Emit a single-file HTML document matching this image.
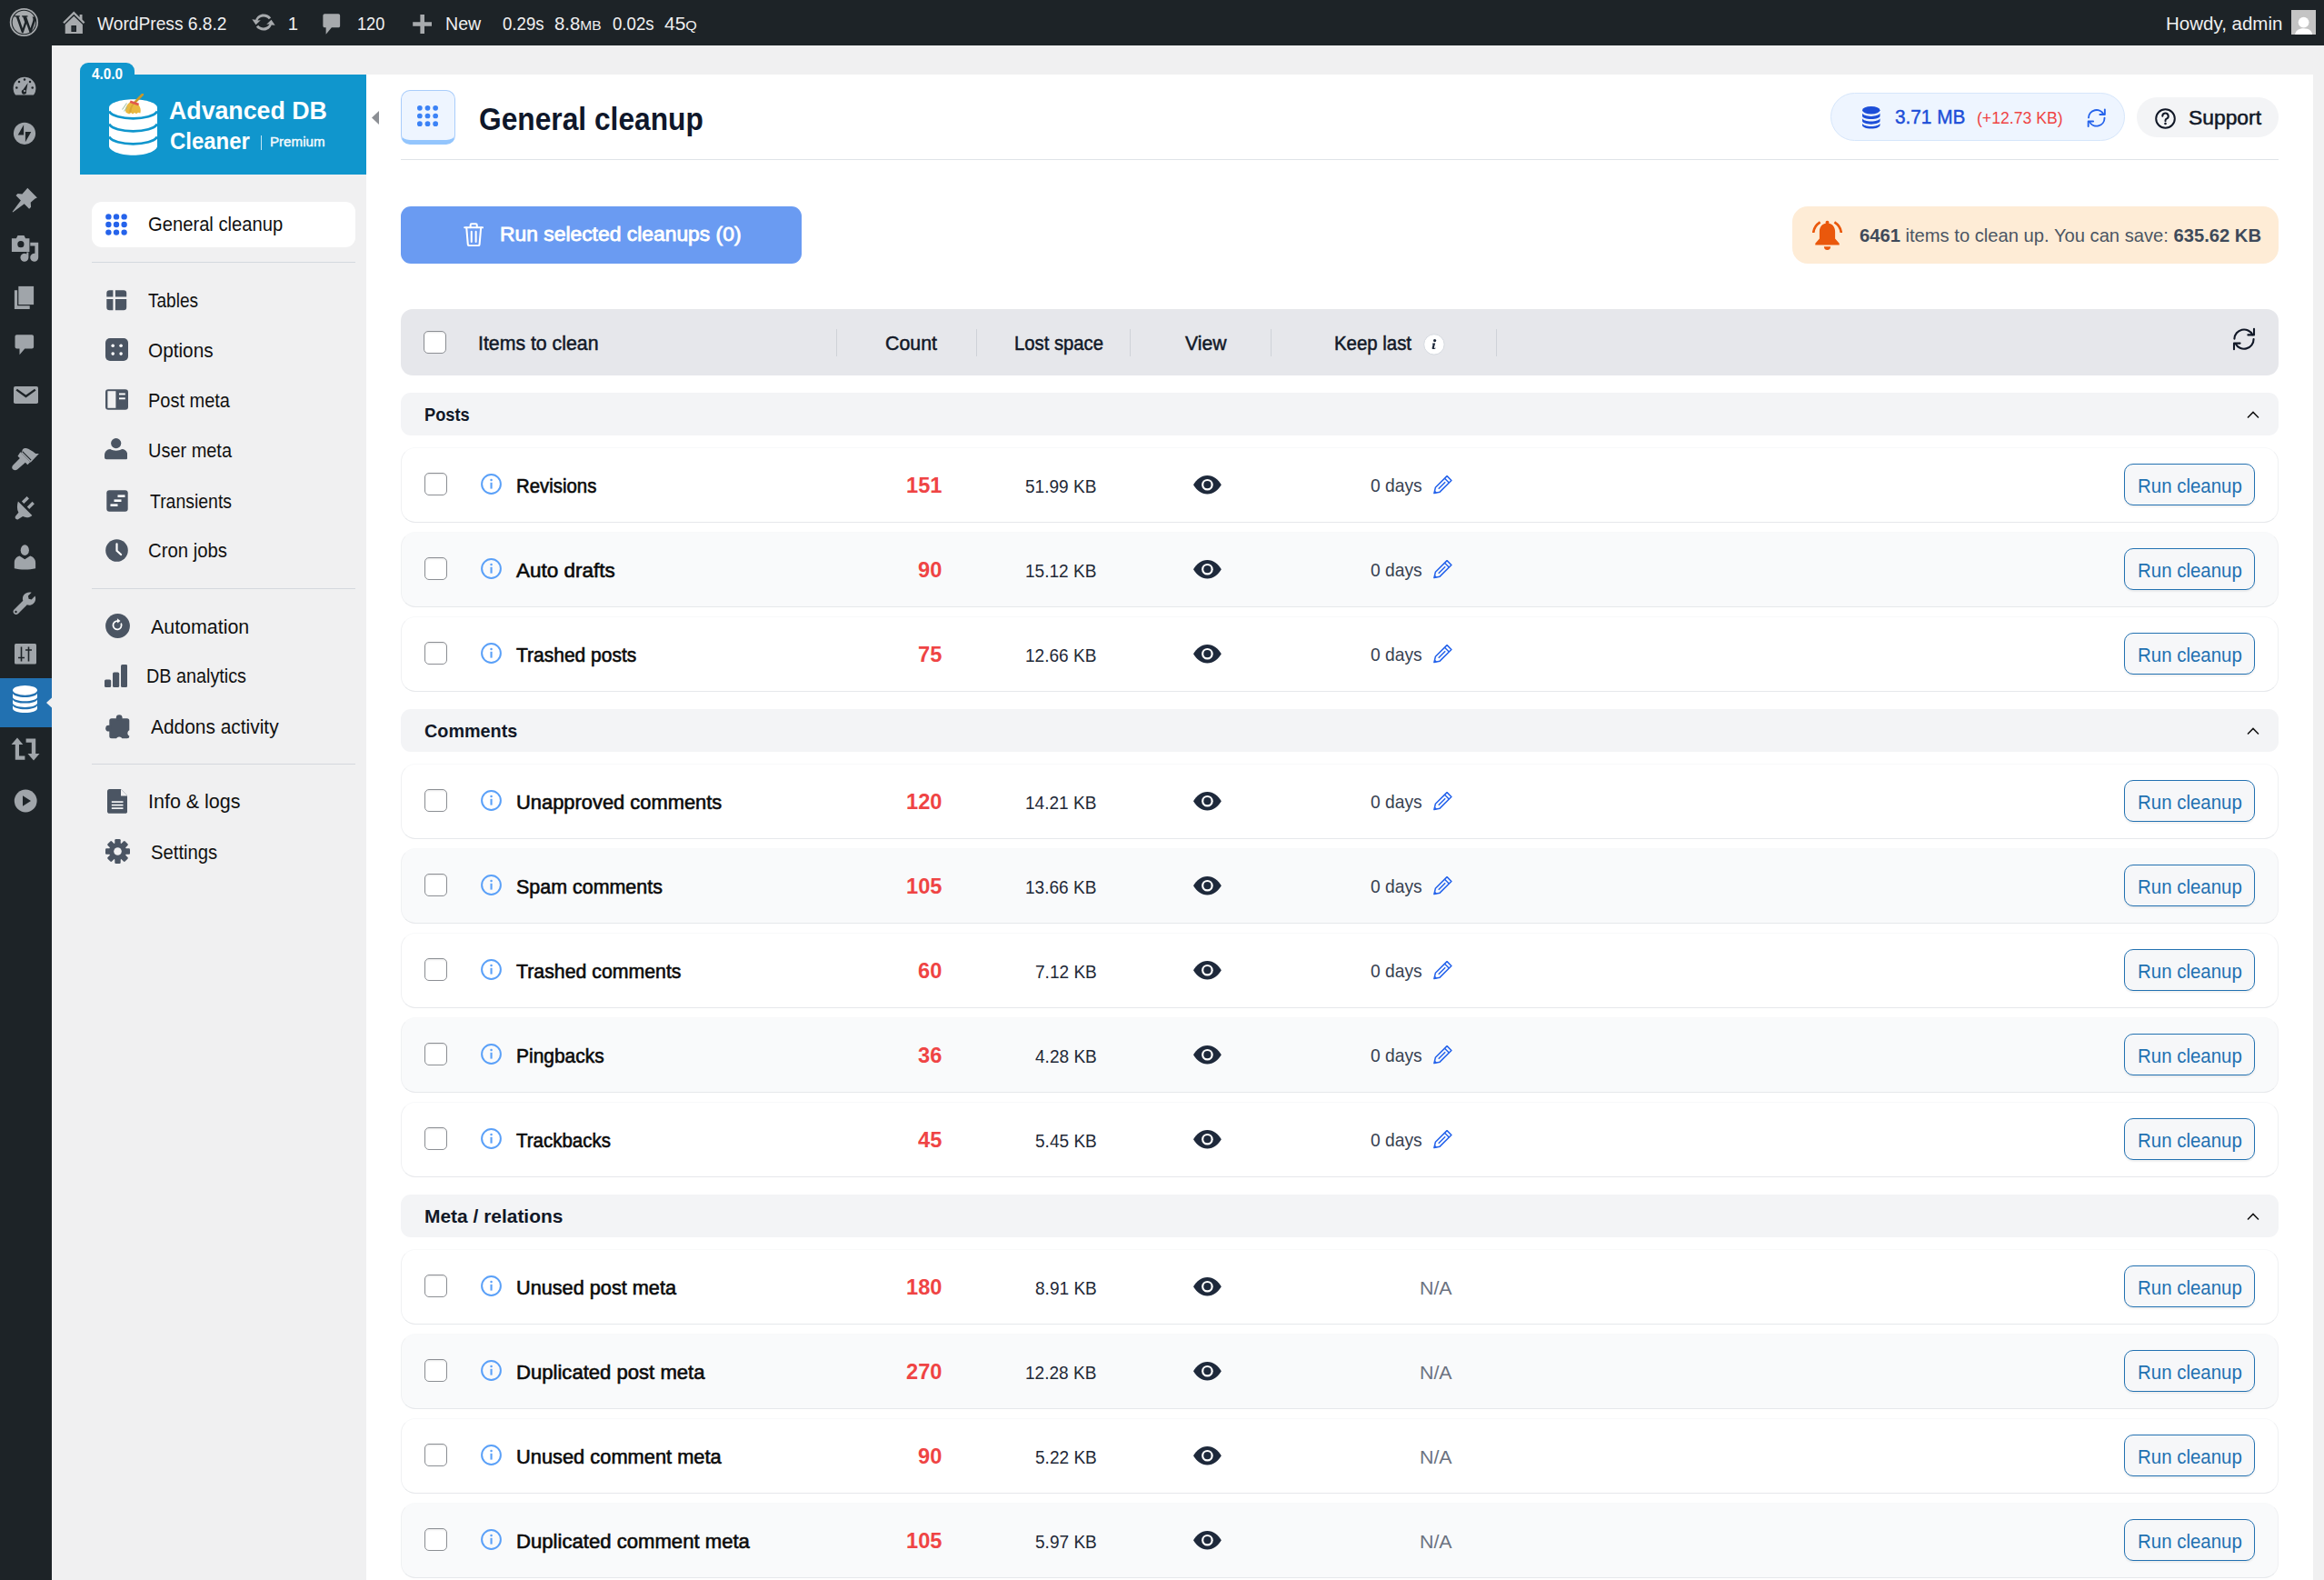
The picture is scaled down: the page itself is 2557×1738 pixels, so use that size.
<!DOCTYPE html>
<html><head><meta charset="utf-8"><title>Advanced DB Cleaner</title>
<style>
html,body{margin:0;padding:0;}
body{width:2557px;height:1738px;overflow:hidden;position:relative;background:#f0f0f1;font-family:'Liberation Sans', sans-serif;}

</style></head><body>
<div style="position:absolute;left:0px;top:0px;width:2557px;height:50px;background:#1d2327;"></div>
<svg style="position:absolute;left:10px;top:8px;" width="33" height="33" viewBox="0 0 33 33"><circle cx="16.4" cy="16.5" r="15.6" fill="#a7aaad"/><circle cx="16.4" cy="16.5" r="13.3" fill="none" stroke="#1d2327" stroke-width="1.1"/><g fill="#1d2327"><path d="M5.6 9.3h6.2v1.1l-1.2.2 4.3 12.6 2.3-6.9-2-5.7-1.1-.2V9.3h6.4v1.1l-1.3.2 4.3 12.5 2.5-7.5c.8-2.3.5-3.8-.6-5.2h3.4c.6 1.3.7 2.9 0 5l-4.5 12.9h-1.6l-3.6-10.4-3.5 10.4h-1.6L7.8 10.6l-2.2-.2z"/></g></svg>
<svg style="position:absolute;left:68px;top:11px;" width="27" height="27" viewBox="0 0 27 27"><path fill="#a7aaad" d="M13.3 1.6 1.2 13.4l1.6 1.6L13.3 4.8l10.5 10.2 1.6-1.6-2.9-2.8V5H19.6v2.9z"/><path fill="#a7aaad" d="M3.7 16 13.3 6.8 22.9 16v10.1H3.7z"/><rect x="10.4" y="17" width="5.6" height="7" fill="#1d2327"/><rect x="11.6" y="18.2" width="3.2" height="4.6" fill="#2a3035"/></svg>
<div style="position:absolute;left:107.20px;top:15.75px;white-space:nowrap;color:#f0f0f1;font-size:20.3px;line-height:20.3px;font-weight:400;transform:scaleX(0.9457);transform-origin:0 0;">WordPress 6.8.2</div>
<svg style="position:absolute;left:275px;top:13px;" width="30" height="23" viewBox="0 0 26 20"><path fill="#a7aaad" d="M13 2.2c-3.5 0-6.5 2.2-7.6 5.3L2 7.2l3.6 5.2 4.6-4.3-2.9.1C8.3 6.2 10.5 4.8 13 4.8c2 0 3.8.9 5 2.4l2.1-1.6C18.5 3.5 15.9 2.2 13 2.2zm7.4 5.4-4.6 4.3 2.9-.1c-1 2-3.2 3.4-5.7 3.4-2 0-3.8-.9-5-2.4L5.9 14.4c1.6 2.1 4.2 3.4 7.1 3.4 3.5 0 6.5-2.2 7.6-5.3l3.4.3-3.6-5.2z"/></svg>
<div style="position:absolute;left:316.80px;top:15.75px;white-space:nowrap;color:#f0f0f1;font-size:20.3px;line-height:20.3px;font-weight:400;">1</div>
<svg style="position:absolute;left:354px;top:14px;" width="21.5" height="25" viewBox="0 0 17 20"><path fill="#a7aaad" d="M2.5 1h12c.9 0 1.5.7 1.5 1.5v9c0 .8-.6 1.5-1.5 1.5H8.6L3.6 19v-6H2.5C1.7 13 1 12.3 1 11.5v-9C1 1.7 1.7 1 2.5 1z"/></svg>
<div style="position:absolute;left:393.00px;top:15.75px;white-space:nowrap;color:#f0f0f1;font-size:20.3px;line-height:20.3px;font-weight:400;transform:scaleX(0.8953);transform-origin:0 0;">120</div>
<svg style="position:absolute;left:453.6px;top:15.7px;" width="21.4" height="21" viewBox="0 0 20 20"><path fill="#a7aaad" d="M7.8 0h4.4v7.8H20v4.4h-7.8V20H7.8v-7.8H0V7.8h7.8z"/></svg>
<div style="position:absolute;left:489.50px;top:15.75px;white-space:nowrap;color:#f0f0f1;font-size:20.3px;line-height:20.3px;font-weight:400;transform:scaleX(0.9660);transform-origin:0 0;">New</div>
<div style="position:absolute;left:553.20px;top:15.75px;white-space:nowrap;color:#f0f0f1;font-size:20.3px;line-height:20.3px;font-weight:400;transform:scaleX(0.9189);transform-origin:0 0;">0.29s</div>
<div style="position:absolute;left:610.30px;top:15.75px;white-space:nowrap;color:#f0f0f1;font-size:20.3px;line-height:20.3px;font-weight:400;transform:scaleX(1.0048);transform-origin:0 0;">8.8<span style="font-size:15.5px">MB</span></div>
<div style="position:absolute;left:673.70px;top:15.75px;white-space:nowrap;color:#f0f0f1;font-size:20.3px;line-height:20.3px;font-weight:400;transform:scaleX(0.9189);transform-origin:0 0;">0.02s</div>
<div style="position:absolute;left:730.50px;top:15.75px;white-space:nowrap;color:#f0f0f1;font-size:20.3px;line-height:20.3px;font-weight:400;transform:scaleX(1.0339);transform-origin:0 0;">45<span style="font-size:15.5px">Q</span></div>
<div style="position:absolute;left:2383.00px;top:15.78px;white-space:nowrap;color:#f0f0f1;font-size:20.5px;line-height:20.5px;font-weight:400;">Howdy, admin</div>
<div style="position:absolute;left:2521px;top:11px;width:27px;height:27px;background:#c4c4c4;overflow:hidden;"></div>
<svg style="position:absolute;left:2521px;top:11px;" width="27" height="27" viewBox="0 0 27 27"><circle cx="13.6" cy="13.6" r="5.9" fill="#fff"/><path d="M4.2 27c.3-4.5 4.2-6.8 9.4-6.8s9.1 2.3 9.4 6.8z" fill="#fff"/></svg>
<div style="position:absolute;left:0px;top:50px;width:57px;height:1688px;background:#1d2327;"></div>
<svg style="position:absolute;left:0px;top:80px;" width="57" height="30" viewBox="0 80 57 30"><path fill="#a0a5aa" d="M17.1 104.6A12.4 12.4 0 1 1 36.9 104.6Z"/><g fill="#1d2327"><circle cx="27" cy="87.4" r="1.25"/><circle cx="21" cy="90" r="1.25"/><circle cx="33" cy="90" r="1.25"/><circle cx="18.3" cy="96.5" r="1.25"/><circle cx="35.7" cy="96.5" r="1.25"/><path d="M30.6 91.3 25.3 98.8a2.6 2.6 0 1 0 3.6 1.6z"/></g><circle cx="27.1" cy="100.1" r="1.15" fill="#a0a5aa"/></svg>
<svg style="position:absolute;left:0px;top:130px;" width="57" height="32" viewBox="0 130 57 32"><circle cx="27" cy="146.8" r="12.1" fill="#a0a5aa"/><path fill="#1d2327" d="M26.1 137.3v11.2h-6.4zM27.9 156.3v-11.2h6.4z"/></svg>
<svg style="position:absolute;left:0px;top:205px;" width="57" height="33" viewBox="0 205 57 33"><path fill="#a0a5aa" d="M30.3 206.8l10.6 10.6-2.3 1-4.9 4.4.4 4.9-2 2-5.4-5.4-12.6 9.3-.5-.5 9.3-12.6-5.4-5.4 2-2 4.9.4 4.4-4.9z"/></svg>
<svg style="position:absolute;left:0px;top:255px;" width="57" height="37" viewBox="0 255 57 37"><path fill="#a0a5aa" d="M12.9 262.3h5l1.6-3.4h7l1.6 3.4h4.3v14.6H12.9z"/><circle cx="22.9" cy="268.7" r="3.6" fill="#1d2327"/><path fill="#a0a5aa" d="M33.3 266.8h8.9v16.4a4.5 4.5 0 1 1-3.8-4.4v-8.2h-5.1z"/><path fill="#a0a5aa" d="M29.3 277.5h2.1v5.7a4.5 4.5 0 1 1-2.1-3.8z"/></svg>
<svg style="position:absolute;left:0px;top:312px;" width="57" height="30" viewBox="0 312 57 30"><path fill="#a0a5aa" d="M20.3 314.9h16.8v20.2H20.3z"/><path fill="#a0a5aa" d="M15.9 319.3h3.2v16.9h13.6v3.7H15.9z"/></svg>
<svg style="position:absolute;left:0px;top:365px;" width="57" height="31" viewBox="0 365 57 31"><path fill="#a0a5aa" d="M18.5 368.2h16.6c1.1 0 2 .9 2 2v11.3c0 1.1-.9 2-2 2h-7.8l-5.8 6.8v-6.8h-3c-1.1 0-2-.9-2-2v-11.3c0-1.1.9-2 2-2z"/></svg>
<svg style="position:absolute;left:0px;top:422px;" width="57" height="26" viewBox="0 422 57 26"><rect x="15" y="425" width="27" height="19" rx="1.8" fill="#a0a5aa"/><path d="M18.2 428.6 28.5 436l10.3-7.4" fill="none" stroke="#1d2327" stroke-width="2.4"/></svg>
<svg style="position:absolute;left:0px;top:490px;" width="57" height="30" viewBox="0 490 57 30"><path fill="#a0a5aa" d="M25 494.2c1-1 2.3-1.4 3.7-1.1 3.3.8 6.6 3 10.5 5.8l3.7.2-8.6 8.9-.5.8-10.5-10.5z"/><path fill="#a0a5aa" d="M22.4 497.3 33.3 508.2l-3 3-2.4-2.4-8.6 7.4c-1.8 1.5-4.5 1.3-5.6-.4-.9-1.4-.5-3.1.8-4.3l7.4-7.4-2.4-2.4z"/><path d="M24.6 496.6 34.1 506.1" stroke="#1d2327" stroke-width="1.1"/></svg>
<svg style="position:absolute;left:0px;top:543px;" width="57" height="31" viewBox="0 543 57 31"><path fill="#a0a5aa" d="M19.9 551.6 35.4 566.9c-2.8 2.6-6.9 3-10.3 1.2l-5.2 3.1c-1.2.5-2.4-.1-2.9-1-.6-.9-.4-2.1.5-2.9l2.9-3.6c-2-3.3-1.7-8.1-.5-12.1z"/><path fill="#a0a5aa" d="M23.9 551.6 29.6 546l2.4 2.4-5.7 5.7zM29.8 557.5l5.7-5.7 2.4 2.4-5.7 5.7z"/></svg>
<svg style="position:absolute;left:0px;top:597px;" width="57" height="31" viewBox="0 597 57 31"><ellipse cx="27.3" cy="605.2" rx="4.6" ry="5.9" fill="#a0a5aa"/><path fill="#a0a5aa" d="M15.8 625.2v-6.3c0-3.4 2.2-6.6 5.6-7.3l5.9 3.7 5.9-3.7c3.4.7 5.9 3.9 5.9 7.3v6.3c-3.5.9-7.2 1.3-11.8 1.3s-8.1-.4-11.5-1.3z"/></svg>
<svg style="position:absolute;left:0px;top:650px;" width="57" height="30" viewBox="0 650 57 30"><path fill="#a0a5aa" d="M38.5 655.6l-3.8 3.8-3.1-.7-.7-3.1 3.8-3.8c-2.8-1-6.1-.2-8.1 2.1-1.7 2-2.1 4.6-1.3 6.9l-9.8 9.8c-1.3 1.3-1.3 3.3 0 4.5 1.3 1.3 3.2 1.3 4.5 0l9.8-9.8c2.3.9 5 .4 6.9-1.3 2.4-2 3.2-5.3 1.8-8.4z"/><circle cx="17.5" cy="673" r="1.2" fill="#1d2327"/></svg>
<svg style="position:absolute;left:0px;top:705px;" width="57" height="28" viewBox="0 705 57 28"><rect x="16" y="708" width="24" height="22.5" rx="1.5" fill="#a0a5aa"/><path d="M23.5 711.5v16M31.5 711.5v16M20 723.5h7M28 715h7" stroke="#1d2327" stroke-width="1.6" fill="none"/></svg>
<div style="position:absolute;left:0px;top:746px;width:57px;height:54px;background:#2271b1;"></div>
<svg style="position:absolute;left:50.5px;top:767px;" width="6.5" height="12" viewBox="0 0 6.5 12"><path d="M6.5 0V12L0 6z" fill="#f0f0f1"/></svg>
<svg style="position:absolute;left:0px;top:750px;" width="57" height="40" viewBox="0 750 57 40"><g fill="#fff"><ellipse cx="27.5" cy="759.3" rx="13.5" ry="5.4"/><path d="M14 762.8c1 2.7 6.6 4.2 13.5 4.2s12.5-1.5 13.5-4.2v4.2c-.6 2.6-6.4 4.3-13.5 4.3s-12.9-1.7-13.5-4.3z"/><path d="M14 769.4c1 2.7 6.6 4.2 13.5 4.2s12.5-1.5 13.5-4.2v4.2c-.6 2.6-6.4 4.3-13.5 4.3s-12.9-1.7-13.5-4.3z"/><path d="M14 776c1 2.7 6.6 4.2 13.5 4.2s12.5-1.5 13.5-4.2v3.2c0 2.9-6 4.9-13.5 4.9s-13.5-2-13.5-4.9z"/></g></svg>
<svg style="position:absolute;left:0px;top:808px;" width="57" height="32" viewBox="0 808 57 32"><path fill="#a0a5aa" d="M19 811.5 12.5 819h4.3v16.8h10.6v-4.2h-6.4V819h4.3zM28.6 812.5h10.6v16.6h4.3l-6.5 7.5-6.5-7.5h4.3V816.7h-6.2z"/></svg>
<svg style="position:absolute;left:0px;top:866px;" width="57" height="30" viewBox="0 866 57 30"><circle cx="28.2" cy="881" r="12.4" fill="#a0a5aa"/><path d="M25 875.2v11.6l9-5.8z" fill="#1d2327"/></svg>
<div style="position:absolute;left:88px;top:69px;width:60px;height:30px;background:#1096cd;border-radius:9px 9px 0 0;"></div>
<div style="position:absolute;left:88px;top:82px;width:315px;height:110px;background:#1096cd;"></div>
<div style="position:absolute;left:101.00px;top:73.86px;white-space:nowrap;color:#fff;font-size:15.7px;line-height:15.7px;font-weight:700;transform:scaleX(0.9740);transform-origin:0 0;">4.0.0</div>
<svg style="position:absolute;left:120px;top:103px;" width="53" height="68" viewBox="0 0 53 68"><path fill="#fff" d="M0 15.5C0 10.5 11.9 6.3 26.5 6.3S53 10.5 53 15.5V57.5C53 62.8 41.1 67.8 26.5 67.8S0 62.8 0 57.5z"/><g fill="none" stroke="#1096cd" stroke-width="2.8"><path d="M0 19.5C3 24.5 14 27.3 26.5 27.3S50 24.5 53 19.5"/><path d="M0 33.5C3 38.5 14 41.3 26.5 41.3S50 38.5 53 33.5"/><path d="M0 47.5C3 52.5 14 55.3 26.5 55.3S50 52.5 53 47.5"/></g><path d="M28.5 9.5 36.8 1" stroke="#c9992c" stroke-width="2.6" stroke-linecap="round"/><path fill="#e9b840" d="M18.6 20.8C16.9 16.2 19.6 11.2 24.2 8.8l7.6 2.6c2.6 2.6 3.6 6.4 2.6 10.2l-2.4-.9-2 1.6-2-1.4-2 1.6-1.9-1.5-2 1.4z"/><path fill="#d4a030" opacity=".8" d="M22 20.5c.5-4 2-7.5 4.5-10l1.2.5c-2 2.7-3.2 6-3.4 9.8z"/><path fill="#e2574c" d="M23.6 7.6l9.4 3.2-.9 2.4-9.4-3.2z"/><g stroke="#9dbd9a" stroke-width="1.1" opacity=".85"><path d="M14.5 17.5 19.5 10.5"/><path d="M16.5 19.5 20 14.5"/></g></svg>
<div style="position:absolute;left:186.10px;top:108.10px;white-space:nowrap;color:#fff;font-size:28px;line-height:28px;font-weight:700;transform:scaleX(0.9547);transform-origin:0 0;">Advanced DB</div>
<div style="position:absolute;left:187.00px;top:142.92px;white-space:nowrap;color:#fff;font-size:25.5px;line-height:25.5px;font-weight:700;transform:scaleX(0.9386);transform-origin:0 0;">Cleaner</div>
<div style="position:absolute;left:287px;top:149px;width:1px;height:15.6px;background:rgba(255,255,255,.75);"></div>
<div style="position:absolute;left:297.30px;top:149.12px;white-space:nowrap;color:rgba(255,255,255,.92);font-size:14.8px;line-height:14.8px;font-weight:400;-webkit-text-stroke:0.5px currentColor;transform:scaleX(1.0219);transform-origin:0 0;">Premium</div>
<svg style="position:absolute;left:409px;top:122px;" width="8" height="15" viewBox="0 0 8 15"><path d="M8 0V15L0 7.5z" fill="#8c8f94"/></svg>
<div style="position:absolute;left:101px;top:222px;width:290px;height:49.5px;background:#fff;border-radius:11px;"></div>
<svg style="position:absolute;left:116px;top:234.7px;" width="24" height="24" viewBox="0 0 23.4 23.4"><circle cx="3.3" cy="3.3" r="3.1" fill="#2563eb"/><circle cx="3.3" cy="11.7" r="3.1" fill="#2563eb"/><circle cx="3.3" cy="20.1" r="3.1" fill="#2563eb"/><circle cx="11.7" cy="3.3" r="3.1" fill="#2563eb"/><circle cx="11.7" cy="11.7" r="3.1" fill="#2563eb"/><circle cx="11.7" cy="20.1" r="3.1" fill="#2563eb"/><circle cx="20.1" cy="3.3" r="3.1" fill="#2563eb"/><circle cx="20.1" cy="11.7" r="3.1" fill="#2563eb"/><circle cx="20.1" cy="20.1" r="3.1" fill="#2563eb"/></svg>
<div style="position:absolute;left:162.80px;top:236.44px;white-space:nowrap;color:#101010;font-size:22.3px;line-height:22.3px;font-weight:400;transform:scaleX(0.9057);transform-origin:0 0;">General cleanup</div>
<div style="position:absolute;left:101px;top:288px;width:290px;height:1.3px;background:#d4d8de;"></div>
<svg style="position:absolute;left:115.5px;top:317.5px;" width="25" height="25" viewBox="0 0 25 25"><g fill="#4b5563"><path d="M4.5 1.3h3.9v7.3H1.3V4.5a3.2 3.2 0 0 1 3.2-3.2z"/><path d="M10.9 1.3h9.1a3.2 3.2 0 0 1 3.2 3.2v4.1H10.9z"/><path d="M1.3 11.1h7.1v12.2H4.5a3.2 3.2 0 0 1-3.2-3.2z"/><path d="M10.9 11.1h12.3v9a3.2 3.2 0 0 1-3.2 3.2h-9.1z"/></g></svg>
<div style="position:absolute;left:163.00px;top:319.94px;white-space:nowrap;color:#101010;font-size:22.3px;line-height:22.3px;font-weight:400;transform:scaleX(0.8533);transform-origin:0 0;">Tables</div>
<svg style="position:absolute;left:115.5px;top:372.1px;" width="25" height="25" viewBox="0 0 25 25"><rect x="0" y="0" width="25" height="25" rx="5" fill="#4b5563"/><g fill="#fff"><circle cx="8.2" cy="8.3" r="1.8"/><circle cx="17.1" cy="8.3" r="1.8"/><circle cx="8.2" cy="17.1" r="1.8"/><circle cx="17.1" cy="17.1" r="1.8"/></g></svg>
<div style="position:absolute;left:163.00px;top:374.55px;white-space:nowrap;color:#101010;font-size:22.3px;line-height:22.3px;font-weight:400;transform:scaleX(0.9318);transform-origin:0 0;">Options</div>
<svg style="position:absolute;left:115.5px;top:427.3px;" width="25" height="25" viewBox="0 0 25 25"><rect x="0" y="1.2" width="25" height="22.6" rx="3.2" fill="#4b5563"/><rect x="2.4" y="3.2" width="9" height="18.6" fill="#f0f0f1"/><g fill="#fff"><rect x="15" y="5.5" width="6.8" height="1.9"/><rect x="15" y="10.4" width="6.8" height="1.9"/></g></svg>
<div style="position:absolute;left:163.00px;top:429.75px;white-space:nowrap;color:#101010;font-size:22.3px;line-height:22.3px;font-weight:400;transform:scaleX(0.8965);transform-origin:0 0;">Post meta</div>
<svg style="position:absolute;left:114.5px;top:482.3px;" width="25.5" height="25" viewBox="0 0 25.5 25"><g fill="#4b5563"><circle cx="12.7" cy="5.6" r="5.6"/><path d="M0 19c0-3.9 2.7-6.9 6.3-6.9 1.9 1.2 4 1.7 6.4 1.7s4.5-.5 6.4-1.7c3.6 0 6.3 3 6.3 6.9v2c0 1.3-.9 2.3-2.1 2.3H2.1C.9 23.3 0 22.3 0 21z"/></g></svg>
<div style="position:absolute;left:163.00px;top:484.75px;white-space:nowrap;color:#101010;font-size:22.3px;line-height:22.3px;font-weight:400;transform:scaleX(0.8946);transform-origin:0 0;">User meta</div>
<svg style="position:absolute;left:115.5px;top:538.1px;" width="25" height="25" viewBox="0 0 25 25"><rect x="1.3" y="1.3" width="23.4" height="23.4" rx="3" fill="#4b5563"/><g fill="#fff"><rect x="13.5" y="6.4" width="8" height="2.6"/><rect x="9.5" y="11.4" width="8" height="2.6"/><rect x="5.5" y="16.4" width="8" height="2.6"/></g></svg>
<div style="position:absolute;left:164.50px;top:540.54px;white-space:nowrap;color:#101010;font-size:22.3px;line-height:22.3px;font-weight:400;transform:scaleX(0.8715);transform-origin:0 0;">Transients</div>
<svg style="position:absolute;left:115.5px;top:592.7px;" width="25" height="25" viewBox="0 0 25 25"><circle cx="12.5" cy="12.5" r="12.3" fill="#4b5563"/><path d="M12.5 5.3v7.4l4.6 4.3" fill="none" stroke="#fff" stroke-width="2.2" stroke-linecap="round"/></svg>
<div style="position:absolute;left:163.00px;top:595.14px;white-space:nowrap;color:#101010;font-size:22.3px;line-height:22.3px;font-weight:400;transform:scaleX(0.9116);transform-origin:0 0;">Cron jobs</div>
<div style="position:absolute;left:101px;top:647px;width:290px;height:1.3px;background:#d4d8de;"></div>
<svg style="position:absolute;left:115.5px;top:675.1px;" width="27" height="27" viewBox="-0.7 -0.7 27 27"><circle cx="12.8" cy="12.8" r="13.4" fill="#4b5563"/><path d="M16.7 10.6a4.6 4.6 0 1 1-3.9-3.1" fill="none" stroke="#fff" stroke-width="1.8" stroke-linecap="round"/><path d="M12.2 4.6l3.6 2.7-3.3 2.6z" fill="#fff"/></svg>
<div style="position:absolute;left:166.00px;top:678.54px;white-space:nowrap;color:#101010;font-size:22.3px;line-height:22.3px;font-weight:400;transform:scaleX(0.9592);transform-origin:0 0;">Automation</div>
<svg style="position:absolute;left:114.7px;top:730.5px;" width="25" height="25" viewBox="0 0 25 25"><g fill="#4b5563"><rect x="0" y="16.4" width="7.2" height="8.6" rx="1.6"/><rect x="9" y="8.6" width="7.2" height="16.4" rx="1.6"/><rect x="18" y="0" width="7.2" height="25" rx="1.6"/></g></svg>
<div style="position:absolute;left:161.30px;top:732.94px;white-space:nowrap;color:#101010;font-size:22.3px;line-height:22.3px;font-weight:400;transform:scaleX(0.8877);transform-origin:0 0;">DB analytics</div>
<svg style="position:absolute;left:115.7px;top:785.5px;" width="27" height="27" viewBox="0 0 27 27"><g fill="#4b5563"><rect x="4.3" y="4.3" width="22" height="22" rx="2.5"/><circle cx="15.2" cy="3.6" r="3.4"/><circle cx="3.6" cy="15.2" r="3.4"/></g><circle cx="27.6" cy="20.5" r="3.2" fill="#f0f0f1"/><circle cx="15.2" cy="27.6" r="3.2" fill="#f0f0f1"/></svg>
<div style="position:absolute;left:166.00px;top:788.94px;white-space:nowrap;color:#101010;font-size:22.3px;line-height:22.3px;font-weight:400;transform:scaleX(0.9375);transform-origin:0 0;">Addons activity</div>
<div style="position:absolute;left:101px;top:840px;width:290px;height:1.3px;background:#d4d8de;"></div>
<svg style="position:absolute;left:117.5px;top:867.5px;" width="22.3" height="27" viewBox="0 0 22.3 27"><path fill="#4b5563" d="M2.4 0h12.7l7.2 7.3v17.1c0 1.3-1.1 2.4-2.4 2.4H2.4C1.1 26.8 0 25.7 0 24.4V2.4C0 1.1 1.1 0 2.4 0z"/><path fill="#f0f0f1" d="M15 0v7.4h7.3z"/><g fill="#fff"><rect x="4.8" y="13.3" width="12.7" height="1.6"/><rect x="4.8" y="16.8" width="12.7" height="1.6"/><rect x="4.8" y="20.3" width="12.7" height="1.6"/></g></svg>
<div style="position:absolute;left:163.00px;top:870.94px;white-space:nowrap;color:#101010;font-size:22.3px;line-height:22.3px;font-weight:400;transform:scaleX(0.9634);transform-origin:0 0;">Info & logs</div>
<svg style="position:absolute;left:116px;top:923.1px;" width="27" height="27" viewBox="0 0 27 27"><g transform="translate(13.5 13.5)"><g fill="#4b5563"><rect x="-3.2" y="-13.5" width="6.4" height="6" rx="1.2" transform="rotate(0)"/><rect x="-3.2" y="-13.5" width="6.4" height="6" rx="1.2" transform="rotate(45)"/><rect x="-3.2" y="-13.5" width="6.4" height="6" rx="1.2" transform="rotate(90)"/><rect x="-3.2" y="-13.5" width="6.4" height="6" rx="1.2" transform="rotate(135)"/><rect x="-3.2" y="-13.5" width="6.4" height="6" rx="1.2" transform="rotate(180)"/><rect x="-3.2" y="-13.5" width="6.4" height="6" rx="1.2" transform="rotate(225)"/><rect x="-3.2" y="-13.5" width="6.4" height="6" rx="1.2" transform="rotate(270)"/><rect x="-3.2" y="-13.5" width="6.4" height="6" rx="1.2" transform="rotate(315)"/><circle r="9.6"/></g><circle r="4.3" fill="#f0f0f1"/></g></svg>
<div style="position:absolute;left:166.00px;top:926.54px;white-space:nowrap;color:#101010;font-size:22.3px;line-height:22.3px;font-weight:400;transform:scaleX(0.9084);transform-origin:0 0;">Settings</div>
<div style="position:absolute;left:403px;top:82px;width:2142px;height:1656px;background:#fff;"></div>
<svg style="position:absolute;left:409px;top:122px;" width="8" height="15" viewBox="0 0 8 15"><path d="M8 0V15L0 7.5z" fill="#8c8f94"/></svg>
<div style="position:absolute;left:441px;top:99px;width:60px;height:60px;box-sizing:border-box;background:#eef5ff;border:1.3px solid #a9cdfb;border-bottom:5px solid #93c5fd;border-radius:10px;"></div>
<svg style="position:absolute;left:459px;top:115.6px;" width="23" height="23" viewBox="0 0 23 23"><circle cx="2.85" cy="2.85" r="2.85" fill="#3b82f6"/><circle cx="2.85" cy="11.5" r="2.85" fill="#3b82f6"/><circle cx="2.85" cy="20.150000000000002" r="2.85" fill="#3b82f6"/><circle cx="11.5" cy="2.85" r="2.85" fill="#3b82f6"/><circle cx="11.5" cy="11.5" r="2.85" fill="#3b82f6"/><circle cx="11.5" cy="20.150000000000002" r="2.85" fill="#3b82f6"/><circle cx="20.150000000000002" cy="2.85" r="2.85" fill="#3b82f6"/><circle cx="20.150000000000002" cy="11.5" r="2.85" fill="#3b82f6"/><circle cx="20.150000000000002" cy="20.150000000000002" r="2.85" fill="#3b82f6"/></svg>
<div style="position:absolute;left:526.50px;top:113.25px;white-space:nowrap;color:#0f172a;font-size:35px;line-height:35px;font-weight:700;transform:scaleX(0.9063);transform-origin:0 0;">General cleanup</div>
<div style="position:absolute;left:441px;top:174.5px;width:2066px;height:1.3px;background:#dfe3e8;"></div>
<div style="position:absolute;left:2014px;top:102px;width:324px;height:52.5px;box-sizing:border-box;background:#eef5ff;border:1.3px solid #d6e6fb;border-radius:27px;"></div>
<svg style="position:absolute;left:2049px;top:117px;" width="19.5" height="24.5" viewBox="0 0 19.5 24.5"><g fill="#1d4ed8"><ellipse cx="9.75" cy="4.2" rx="9.75" ry="4.2"/><path d="M0 7.6c.8 1.9 4.9 3.3 9.75 3.3s8.95-1.4 9.75-3.3v2.9c0 2-4.4 3.6-9.75 3.6S0 12.5 0 10.5z"/><path d="M0 13.2c.8 1.9 4.9 3.3 9.75 3.3s8.95-1.4 9.75-3.3v2.9c0 2-4.4 3.6-9.75 3.6S0 18.1 0 16.1z"/><path d="M0 18.8c.8 1.9 4.9 3.3 9.75 3.3s8.95-1.4 9.75-3.3v1.9c0 2.1-4.4 3.8-9.75 3.8S0 22.8 0 20.7z"/></g></svg>
<div style="position:absolute;left:2084.70px;top:118.53px;white-space:nowrap;color:#1d4ed8;font-size:21.5px;line-height:21.5px;font-weight:400;-webkit-text-stroke:0.45px currentColor;transform:scaleX(0.9653);transform-origin:0 0;">3.71 MB</div>
<div style="position:absolute;left:2175.40px;top:121.08px;white-space:nowrap;color:#ef4444;font-size:18.5px;line-height:18.5px;font-weight:400;transform:scaleX(0.9531);transform-origin:0 0;">(+12.73 KB)</div>
<svg style="position:absolute;left:2296px;top:118.5px;" width="21.5" height="21.5" viewBox="0 0 26 26"><g fill="none" stroke="#2563eb" stroke-width="2.3" stroke-linecap="round" stroke-linejoin="round"><path d="M2.4 12.6A10.6 10.6 0 0 1 22.4 8.2"/><path d="M23.6 13A10.6 10.6 0 0 1 3.6 18"/><path d="M24 1.8V8.4H17.4"/><path d="M2 24.2V17.6H8.6"/></g></svg>
<div style="position:absolute;left:2351px;top:106.8px;width:156px;height:44px;background:#f3f4f6;border-radius:22px;"></div>
<svg style="position:absolute;left:2371px;top:119px;" width="23" height="23" viewBox="0 0 23 23"><circle cx="11.5" cy="11.5" r="10.3" fill="none" stroke="#111827" stroke-width="2"/><path d="M8.3 8.8a3.2 3.2 0 1 1 4.5 2.9c-.9.4-1.3 1-1.3 1.9v.6" fill="none" stroke="#111827" stroke-width="2" stroke-linecap="round"/><circle cx="11.5" cy="17" r="1.3" fill="#111827"/></svg>
<div style="position:absolute;left:2407.70px;top:118.60px;white-space:nowrap;color:#111827;font-size:22px;line-height:22px;font-weight:400;-webkit-text-stroke:0.5px currentColor;transform:scaleX(1.0381);transform-origin:0 0;">Support</div>
<div style="position:absolute;left:441px;top:227.4px;width:441px;height:62.5px;background:#6a9bf2;border-radius:11px;"></div>
<svg style="position:absolute;left:509.7px;top:244.6px;" width="22.4" height="26.5" viewBox="0 0 22 26"><g fill="none" stroke="#fff" stroke-width="2" stroke-linejoin="round" stroke-linecap="round"><path d="M1.2 5.2h19.6"/><path d="M7.5 5V2.4c0-.7.5-1.2 1.2-1.2h4.6c.7 0 1.2.5 1.2 1.2V5"/><path d="M3.2 5.4l1.5 17.8c.1 1 .8 1.6 1.8 1.6h9c1 0 1.7-.6 1.8-1.6l1.5-17.8"/><path d="M8.6 9.5v11M13.4 9.5v11"/></g></svg>
<div style="position:absolute;left:549.50px;top:246.90px;white-space:nowrap;color:#fff;font-size:22px;line-height:22px;font-weight:400;-webkit-text-stroke:0.8px currentColor;transform:scaleX(1.0388);transform-origin:0 0;">Run selected cleanups (0)</div>
<div style="position:absolute;left:1972px;top:227px;width:535px;height:62.7px;background:#feecd6;border-radius:17px;"></div>
<svg style="position:absolute;left:1994px;top:242px;" width="33" height="34" viewBox="0 0 33 34"><g fill="#ea580c"><circle cx="16.5" cy="2.8" r="2"/><path d="M16.5 3.6c-5.2 0-8.6 3.9-8.6 9.2v7.6l-4.6 5.3v1.9h26.4v-1.9l-4.6-5.3v-7.6c0-5.3-3.4-9.2-8.6-9.2z"/><path d="M12.9 29.3h7.2a3.6 3.6 0 0 1-7.2 0z"/></g><g fill="none" stroke="#ea580c" stroke-width="2.7"><path d="M8.6 2.4C4.3 5.2 1.6 9.3 1.2 14"/><path d="M24.4 2.4c4.3 2.8 7 6.9 7.4 11.6"/></g></svg>
<div style="position:absolute;left:2045.60px;top:249.14px;white-space:nowrap;color:#4b5563;font-size:20.3px;line-height:20.3px;font-weight:400;transform:scaleX(0.9949);transform-origin:0 0;"><b style="color:#3f4a5a">6461</b> items to clean up. You can save: <b style="color:#3f4a5a">635.62 KB</b></div>
<div style="position:absolute;left:441px;top:340px;width:2066px;height:73px;background:#e6e7eb;border-radius:13px;"></div>
<div style="position:absolute;left:466px;top:364px;width:24.7px;height:24.7px;box-sizing:border-box;background:#fff;border:1.3px solid #8c8f94;border-radius:5px;box-shadow:inset 0 1px 2px rgba(0,0,0,.1);"></div>
<div style="position:absolute;left:526.40px;top:367.00px;white-space:nowrap;color:#111827;font-size:22px;line-height:22px;font-weight:400;-webkit-text-stroke:0.5px currentColor;transform:scaleX(0.9675);transform-origin:0 0;">Items to clean</div>
<div style="position:absolute;left:919.6px;top:361.6px;width:1px;height:30px;background:#cfd2d8;"></div>
<div style="position:absolute;left:1073.5px;top:361.6px;width:1px;height:30px;background:#cfd2d8;"></div>
<div style="position:absolute;left:1243.2px;top:361.6px;width:1px;height:30px;background:#cfd2d8;"></div>
<div style="position:absolute;left:1398px;top:361.6px;width:1px;height:30px;background:#cfd2d8;"></div>
<div style="position:absolute;left:1646px;top:361.6px;width:1px;height:30px;background:#cfd2d8;"></div>
<div style="position:absolute;left:974.00px;top:367.00px;white-space:nowrap;color:#111827;font-size:22px;line-height:22px;font-weight:400;-webkit-text-stroke:0.5px currentColor;transform:scaleX(0.9707);transform-origin:0 0;">Count</div>
<div style="position:absolute;left:1116.00px;top:367.00px;white-space:nowrap;color:#111827;font-size:22px;line-height:22px;font-weight:400;-webkit-text-stroke:0.5px currentColor;transform:scaleX(0.9210);transform-origin:0 0;">Lost space</div>
<div style="position:absolute;left:1304.45px;top:367.00px;white-space:nowrap;color:#111827;font-size:22px;line-height:22px;font-weight:400;-webkit-text-stroke:0.5px currentColor;transform:scaleX(0.9620);transform-origin:0 0;">View</div>
<div style="position:absolute;left:1468.00px;top:367.00px;white-space:nowrap;color:#111827;font-size:22px;line-height:22px;font-weight:400;-webkit-text-stroke:0.5px currentColor;transform:scaleX(0.9266);transform-origin:0 0;">Keep last</div>
<svg style="position:absolute;left:1566px;top:367px;" width="24" height="24" viewBox="0 0 24 24"><circle cx="11.9" cy="11.9" r="11.2" fill="#fff" stroke="#d5d9df" stroke-width="1"/><circle cx="12.6" cy="7.6" r="1.6" fill="#1e293b"/><path d="M10.3 10.6h2.9l-1.3 4.6c-.2.7.1.9.9.6l.8-.3-.3.9c-1.2.6-2 .8-2.7.7-.9-.2-1.2-.9-.9-1.9l.9-3.4h-.6z" fill="#1e293b"/></svg>
<svg style="position:absolute;left:2456px;top:360px;" width="26" height="26" viewBox="0 0 26 26"><g fill="none" stroke="#111827" stroke-width="2.1" stroke-linecap="round" stroke-linejoin="round"><path d="M2.4 12.6A10.6 10.6 0 0 1 22.4 8.2"/><path d="M23.6 13A10.6 10.6 0 0 1 3.6 18"/><path d="M24 1.8V8.4H17.4"/><path d="M2 24.2V17.6H8.6"/></g></svg>
<div style="position:absolute;left:441px;top:432px;width:2066px;height:46.5px;background:#f3f4f6;border-radius:11px;"></div>
<div style="position:absolute;left:466.70px;top:445.83px;white-space:nowrap;color:#111827;font-size:20.2px;line-height:20.2px;font-weight:700;transform:scaleX(0.9039);transform-origin:0 0;">Posts</div>
<svg style="position:absolute;left:2471.5px;top:451.5px;" width="14" height="9" viewBox="0 0 14 9"><path d="M1 7.6 7 1.4 13 7.6" fill="none" stroke="#111" stroke-width="1.45"/></svg>
<div style="position:absolute;left:441px;top:492px;width:2066px;height:82.5px;box-sizing:border-box;background:#ffffff;border:1px solid #f0f1f3;border-top-color:#f8f9fa;border-bottom-color:#e6e8eb;border-radius:16px;"></div>
<div style="position:absolute;left:467.1px;top:520px;width:24.7px;height:24.7px;box-sizing:border-box;background:#fff;border:1.3px solid #8c8f94;border-radius:5px;box-shadow:inset 0 1px 2px rgba(0,0,0,.1);"></div>
<svg style="position:absolute;left:529.3px;top:521.3px;" width="23" height="23" viewBox="0 0 23 23"><circle cx="11.5" cy="11.5" r="10.4" fill="none" stroke="#5aa0f8" stroke-width="2"/><rect x="10.5" y="9.8" width="2.1" height="6.8" fill="#5aa0f8"/><circle cx="11.55" cy="6.9" r="1.25" fill="#5aa0f8"/></svg>
<div style="position:absolute;left:568.00px;top:523.60px;white-space:nowrap;color:#0b0b0b;font-size:22px;line-height:22px;font-weight:400;-webkit-text-stroke:0.6px currentColor;transform:scaleX(0.9269);transform-origin:0 0;">Revisions</div>
<div style="position:absolute;left:997.00px;top:521.67px;white-space:nowrap;color:#ef4444;font-size:24.5px;line-height:24.5px;font-weight:700;transform:scaleX(0.9660);transform-origin:0 0;">151</div>
<div style="position:absolute;left:1128.15px;top:524.75px;white-space:nowrap;color:#1f2937;font-size:20.3px;line-height:20.3px;font-weight:400;transform:scaleX(0.9400);transform-origin:0 0;">51.99 KB</div>
<svg style="position:absolute;left:1313px;top:523.3px;" width="30.8" height="20.4" viewBox="0 0 30.8 20.4"><path fill="#1e293b" d="M15.4 0C8.7 0 3.3 4.6 0 10.2c3.3 5.6 8.7 10.2 15.4 10.2S27.5 15.8 30.8 10.2C27.5 4.6 22.1 0 15.4 0z"/><circle cx="15.4" cy="10.2" r="6.3" fill="#fff"/><circle cx="15.4" cy="10.2" r="4.1" fill="#1e293b"/></svg>
<div style="position:absolute;left:1507.80px;top:523.95px;white-space:nowrap;color:#374151;font-size:20.3px;line-height:20.3px;font-weight:400;transform:scaleX(0.9470);transform-origin:0 0;">0 days</div>
<svg style="position:absolute;left:1577px;top:523px;" width="20.5" height="20.5" viewBox="0 0 20 20"><g fill="none" stroke="#2563eb" stroke-width="1.5" stroke-linejoin="round"><path d="M0.9 19.1 2.3 13 14.7 0.6 19.4 5.3 7 17.7z"/><path d="M12.2 3.1 16.9 7.8"/><path d="M5.6 14.4 12.9 7.1"/></g><path d="M0.6 19.4 1.4 15.9 4.1 18.6z" fill="#2563eb"/></svg>
<div style="position:absolute;left:2337px;top:510px;width:144px;height:45.6px;box-sizing:border-box;background:#f6f7f9;border:1.6px solid #2271b1;border-radius:10px;box-shadow:0 1.5px 2px rgba(0,0,0,.06);"></div>
<div style="position:absolute;left:2352.00px;top:524.04px;white-space:nowrap;color:#2271b1;font-size:21.6px;line-height:21.6px;font-weight:400;transform:scaleX(0.9467);transform-origin:0 0;">Run cleanup</div>
<div style="position:absolute;left:441px;top:585px;width:2066px;height:82.5px;box-sizing:border-box;background:#f9fafb;border:1px solid #f0f1f3;border-top-color:#f8f9fa;border-bottom-color:#e6e8eb;border-radius:16px;"></div>
<div style="position:absolute;left:467.1px;top:613px;width:24.7px;height:24.7px;box-sizing:border-box;background:#fff;border:1.3px solid #8c8f94;border-radius:5px;box-shadow:inset 0 1px 2px rgba(0,0,0,.1);"></div>
<svg style="position:absolute;left:529.3px;top:614.3px;" width="23" height="23" viewBox="0 0 23 23"><circle cx="11.5" cy="11.5" r="10.4" fill="none" stroke="#5aa0f8" stroke-width="2"/><rect x="10.5" y="9.8" width="2.1" height="6.8" fill="#5aa0f8"/><circle cx="11.55" cy="6.9" r="1.25" fill="#5aa0f8"/></svg>
<div style="position:absolute;left:568.00px;top:616.60px;white-space:nowrap;color:#0b0b0b;font-size:22px;line-height:22px;font-weight:400;-webkit-text-stroke:0.6px currentColor;transform:scaleX(1.0226);transform-origin:0 0;">Auto drafts</div>
<div style="position:absolute;left:1010.16px;top:614.67px;white-space:nowrap;color:#ef4444;font-size:24.5px;line-height:24.5px;font-weight:700;transform:scaleX(0.9660);transform-origin:0 0;">90</div>
<div style="position:absolute;left:1128.15px;top:617.75px;white-space:nowrap;color:#1f2937;font-size:20.3px;line-height:20.3px;font-weight:400;transform:scaleX(0.9400);transform-origin:0 0;">15.12 KB</div>
<svg style="position:absolute;left:1313px;top:616.3px;" width="30.8" height="20.4" viewBox="0 0 30.8 20.4"><path fill="#1e293b" d="M15.4 0C8.7 0 3.3 4.6 0 10.2c3.3 5.6 8.7 10.2 15.4 10.2S27.5 15.8 30.8 10.2C27.5 4.6 22.1 0 15.4 0z"/><circle cx="15.4" cy="10.2" r="6.3" fill="#fff"/><circle cx="15.4" cy="10.2" r="4.1" fill="#1e293b"/></svg>
<div style="position:absolute;left:1507.80px;top:616.95px;white-space:nowrap;color:#374151;font-size:20.3px;line-height:20.3px;font-weight:400;transform:scaleX(0.9470);transform-origin:0 0;">0 days</div>
<svg style="position:absolute;left:1577px;top:616px;" width="20.5" height="20.5" viewBox="0 0 20 20"><g fill="none" stroke="#2563eb" stroke-width="1.5" stroke-linejoin="round"><path d="M0.9 19.1 2.3 13 14.7 0.6 19.4 5.3 7 17.7z"/><path d="M12.2 3.1 16.9 7.8"/><path d="M5.6 14.4 12.9 7.1"/></g><path d="M0.6 19.4 1.4 15.9 4.1 18.6z" fill="#2563eb"/></svg>
<div style="position:absolute;left:2337px;top:603px;width:144px;height:45.6px;box-sizing:border-box;background:#f6f7f9;border:1.6px solid #2271b1;border-radius:10px;box-shadow:0 1.5px 2px rgba(0,0,0,.06);"></div>
<div style="position:absolute;left:2352.00px;top:617.04px;white-space:nowrap;color:#2271b1;font-size:21.6px;line-height:21.6px;font-weight:400;transform:scaleX(0.9467);transform-origin:0 0;">Run cleanup</div>
<div style="position:absolute;left:441px;top:678px;width:2066px;height:82.5px;box-sizing:border-box;background:#ffffff;border:1px solid #f0f1f3;border-top-color:#f8f9fa;border-bottom-color:#e6e8eb;border-radius:16px;"></div>
<div style="position:absolute;left:467.1px;top:706px;width:24.7px;height:24.7px;box-sizing:border-box;background:#fff;border:1.3px solid #8c8f94;border-radius:5px;box-shadow:inset 0 1px 2px rgba(0,0,0,.1);"></div>
<svg style="position:absolute;left:529.3px;top:707.3px;" width="23" height="23" viewBox="0 0 23 23"><circle cx="11.5" cy="11.5" r="10.4" fill="none" stroke="#5aa0f8" stroke-width="2"/><rect x="10.5" y="9.8" width="2.1" height="6.8" fill="#5aa0f8"/><circle cx="11.55" cy="6.9" r="1.25" fill="#5aa0f8"/></svg>
<div style="position:absolute;left:568.00px;top:709.60px;white-space:nowrap;color:#0b0b0b;font-size:22px;line-height:22px;font-weight:400;-webkit-text-stroke:0.6px currentColor;transform:scaleX(0.9546);transform-origin:0 0;">Trashed posts</div>
<div style="position:absolute;left:1010.16px;top:707.67px;white-space:nowrap;color:#ef4444;font-size:24.5px;line-height:24.5px;font-weight:700;transform:scaleX(0.9660);transform-origin:0 0;">75</div>
<div style="position:absolute;left:1128.15px;top:710.75px;white-space:nowrap;color:#1f2937;font-size:20.3px;line-height:20.3px;font-weight:400;transform:scaleX(0.9400);transform-origin:0 0;">12.66 KB</div>
<svg style="position:absolute;left:1313px;top:709.3px;" width="30.8" height="20.4" viewBox="0 0 30.8 20.4"><path fill="#1e293b" d="M15.4 0C8.7 0 3.3 4.6 0 10.2c3.3 5.6 8.7 10.2 15.4 10.2S27.5 15.8 30.8 10.2C27.5 4.6 22.1 0 15.4 0z"/><circle cx="15.4" cy="10.2" r="6.3" fill="#fff"/><circle cx="15.4" cy="10.2" r="4.1" fill="#1e293b"/></svg>
<div style="position:absolute;left:1507.80px;top:709.95px;white-space:nowrap;color:#374151;font-size:20.3px;line-height:20.3px;font-weight:400;transform:scaleX(0.9470);transform-origin:0 0;">0 days</div>
<svg style="position:absolute;left:1577px;top:709px;" width="20.5" height="20.5" viewBox="0 0 20 20"><g fill="none" stroke="#2563eb" stroke-width="1.5" stroke-linejoin="round"><path d="M0.9 19.1 2.3 13 14.7 0.6 19.4 5.3 7 17.7z"/><path d="M12.2 3.1 16.9 7.8"/><path d="M5.6 14.4 12.9 7.1"/></g><path d="M0.6 19.4 1.4 15.9 4.1 18.6z" fill="#2563eb"/></svg>
<div style="position:absolute;left:2337px;top:696px;width:144px;height:45.6px;box-sizing:border-box;background:#f6f7f9;border:1.6px solid #2271b1;border-radius:10px;box-shadow:0 1.5px 2px rgba(0,0,0,.06);"></div>
<div style="position:absolute;left:2352.00px;top:710.04px;white-space:nowrap;color:#2271b1;font-size:21.6px;line-height:21.6px;font-weight:400;transform:scaleX(0.9467);transform-origin:0 0;">Run cleanup</div>
<div style="position:absolute;left:441px;top:780.0px;width:2066px;height:46.5px;background:#f3f4f6;border-radius:11px;"></div>
<div style="position:absolute;left:466.70px;top:793.83px;white-space:nowrap;color:#111827;font-size:20.2px;line-height:20.2px;font-weight:700;transform:scaleX(0.9806);transform-origin:0 0;">Comments</div>
<svg style="position:absolute;left:2471.5px;top:799.5px;" width="14" height="9" viewBox="0 0 14 9"><path d="M1 7.6 7 1.4 13 7.6" fill="none" stroke="#111" stroke-width="1.45"/></svg>
<div style="position:absolute;left:441px;top:840.0px;width:2066px;height:82.5px;box-sizing:border-box;background:#ffffff;border:1px solid #f0f1f3;border-top-color:#f8f9fa;border-bottom-color:#e6e8eb;border-radius:16px;"></div>
<div style="position:absolute;left:467.1px;top:868.0px;width:24.7px;height:24.7px;box-sizing:border-box;background:#fff;border:1.3px solid #8c8f94;border-radius:5px;box-shadow:inset 0 1px 2px rgba(0,0,0,.1);"></div>
<svg style="position:absolute;left:529.3px;top:869.3px;" width="23" height="23" viewBox="0 0 23 23"><circle cx="11.5" cy="11.5" r="10.4" fill="none" stroke="#5aa0f8" stroke-width="2"/><rect x="10.5" y="9.8" width="2.1" height="6.8" fill="#5aa0f8"/><circle cx="11.55" cy="6.9" r="1.25" fill="#5aa0f8"/></svg>
<div style="position:absolute;left:568.00px;top:871.60px;white-space:nowrap;color:#0b0b0b;font-size:22px;line-height:22px;font-weight:400;-webkit-text-stroke:0.6px currentColor;transform:scaleX(0.9949);transform-origin:0 0;">Unapproved comments</div>
<div style="position:absolute;left:997.00px;top:869.67px;white-space:nowrap;color:#ef4444;font-size:24.5px;line-height:24.5px;font-weight:700;transform:scaleX(0.9660);transform-origin:0 0;">120</div>
<div style="position:absolute;left:1128.15px;top:872.75px;white-space:nowrap;color:#1f2937;font-size:20.3px;line-height:20.3px;font-weight:400;transform:scaleX(0.9400);transform-origin:0 0;">14.21 KB</div>
<svg style="position:absolute;left:1313px;top:871.3px;" width="30.8" height="20.4" viewBox="0 0 30.8 20.4"><path fill="#1e293b" d="M15.4 0C8.7 0 3.3 4.6 0 10.2c3.3 5.6 8.7 10.2 15.4 10.2S27.5 15.8 30.8 10.2C27.5 4.6 22.1 0 15.4 0z"/><circle cx="15.4" cy="10.2" r="6.3" fill="#fff"/><circle cx="15.4" cy="10.2" r="4.1" fill="#1e293b"/></svg>
<div style="position:absolute;left:1507.80px;top:871.95px;white-space:nowrap;color:#374151;font-size:20.3px;line-height:20.3px;font-weight:400;transform:scaleX(0.9470);transform-origin:0 0;">0 days</div>
<svg style="position:absolute;left:1577px;top:871.0px;" width="20.5" height="20.5" viewBox="0 0 20 20"><g fill="none" stroke="#2563eb" stroke-width="1.5" stroke-linejoin="round"><path d="M0.9 19.1 2.3 13 14.7 0.6 19.4 5.3 7 17.7z"/><path d="M12.2 3.1 16.9 7.8"/><path d="M5.6 14.4 12.9 7.1"/></g><path d="M0.6 19.4 1.4 15.9 4.1 18.6z" fill="#2563eb"/></svg>
<div style="position:absolute;left:2337px;top:858.0px;width:144px;height:45.6px;box-sizing:border-box;background:#f6f7f9;border:1.6px solid #2271b1;border-radius:10px;box-shadow:0 1.5px 2px rgba(0,0,0,.06);"></div>
<div style="position:absolute;left:2352.00px;top:872.04px;white-space:nowrap;color:#2271b1;font-size:21.6px;line-height:21.6px;font-weight:400;transform:scaleX(0.9467);transform-origin:0 0;">Run cleanup</div>
<div style="position:absolute;left:441px;top:933.0px;width:2066px;height:82.5px;box-sizing:border-box;background:#f9fafb;border:1px solid #f0f1f3;border-top-color:#f8f9fa;border-bottom-color:#e6e8eb;border-radius:16px;"></div>
<div style="position:absolute;left:467.1px;top:961.0px;width:24.7px;height:24.7px;box-sizing:border-box;background:#fff;border:1.3px solid #8c8f94;border-radius:5px;box-shadow:inset 0 1px 2px rgba(0,0,0,.1);"></div>
<svg style="position:absolute;left:529.3px;top:962.3px;" width="23" height="23" viewBox="0 0 23 23"><circle cx="11.5" cy="11.5" r="10.4" fill="none" stroke="#5aa0f8" stroke-width="2"/><rect x="10.5" y="9.8" width="2.1" height="6.8" fill="#5aa0f8"/><circle cx="11.55" cy="6.9" r="1.25" fill="#5aa0f8"/></svg>
<div style="position:absolute;left:568.00px;top:964.60px;white-space:nowrap;color:#0b0b0b;font-size:22px;line-height:22px;font-weight:400;-webkit-text-stroke:0.6px currentColor;transform:scaleX(0.9748);transform-origin:0 0;">Spam comments</div>
<div style="position:absolute;left:997.00px;top:962.67px;white-space:nowrap;color:#ef4444;font-size:24.5px;line-height:24.5px;font-weight:700;transform:scaleX(0.9660);transform-origin:0 0;">105</div>
<div style="position:absolute;left:1128.15px;top:965.75px;white-space:nowrap;color:#1f2937;font-size:20.3px;line-height:20.3px;font-weight:400;transform:scaleX(0.9400);transform-origin:0 0;">13.66 KB</div>
<svg style="position:absolute;left:1313px;top:964.3px;" width="30.8" height="20.4" viewBox="0 0 30.8 20.4"><path fill="#1e293b" d="M15.4 0C8.7 0 3.3 4.6 0 10.2c3.3 5.6 8.7 10.2 15.4 10.2S27.5 15.8 30.8 10.2C27.5 4.6 22.1 0 15.4 0z"/><circle cx="15.4" cy="10.2" r="6.3" fill="#fff"/><circle cx="15.4" cy="10.2" r="4.1" fill="#1e293b"/></svg>
<div style="position:absolute;left:1507.80px;top:964.95px;white-space:nowrap;color:#374151;font-size:20.3px;line-height:20.3px;font-weight:400;transform:scaleX(0.9470);transform-origin:0 0;">0 days</div>
<svg style="position:absolute;left:1577px;top:964.0px;" width="20.5" height="20.5" viewBox="0 0 20 20"><g fill="none" stroke="#2563eb" stroke-width="1.5" stroke-linejoin="round"><path d="M0.9 19.1 2.3 13 14.7 0.6 19.4 5.3 7 17.7z"/><path d="M12.2 3.1 16.9 7.8"/><path d="M5.6 14.4 12.9 7.1"/></g><path d="M0.6 19.4 1.4 15.9 4.1 18.6z" fill="#2563eb"/></svg>
<div style="position:absolute;left:2337px;top:951.0px;width:144px;height:45.6px;box-sizing:border-box;background:#f6f7f9;border:1.6px solid #2271b1;border-radius:10px;box-shadow:0 1.5px 2px rgba(0,0,0,.06);"></div>
<div style="position:absolute;left:2352.00px;top:965.04px;white-space:nowrap;color:#2271b1;font-size:21.6px;line-height:21.6px;font-weight:400;transform:scaleX(0.9467);transform-origin:0 0;">Run cleanup</div>
<div style="position:absolute;left:441px;top:1026.0px;width:2066px;height:82.5px;box-sizing:border-box;background:#ffffff;border:1px solid #f0f1f3;border-top-color:#f8f9fa;border-bottom-color:#e6e8eb;border-radius:16px;"></div>
<div style="position:absolute;left:467.1px;top:1054.0px;width:24.7px;height:24.7px;box-sizing:border-box;background:#fff;border:1.3px solid #8c8f94;border-radius:5px;box-shadow:inset 0 1px 2px rgba(0,0,0,.1);"></div>
<svg style="position:absolute;left:529.3px;top:1055.3px;" width="23" height="23" viewBox="0 0 23 23"><circle cx="11.5" cy="11.5" r="10.4" fill="none" stroke="#5aa0f8" stroke-width="2"/><rect x="10.5" y="9.8" width="2.1" height="6.8" fill="#5aa0f8"/><circle cx="11.55" cy="6.9" r="1.25" fill="#5aa0f8"/></svg>
<div style="position:absolute;left:568.00px;top:1057.60px;white-space:nowrap;color:#0b0b0b;font-size:22px;line-height:22px;font-weight:400;-webkit-text-stroke:0.6px currentColor;transform:scaleX(0.9681);transform-origin:0 0;">Trashed comments</div>
<div style="position:absolute;left:1010.16px;top:1055.67px;white-space:nowrap;color:#ef4444;font-size:24.5px;line-height:24.5px;font-weight:700;transform:scaleX(0.9660);transform-origin:0 0;">60</div>
<div style="position:absolute;left:1138.76px;top:1058.74px;white-space:nowrap;color:#1f2937;font-size:20.3px;line-height:20.3px;font-weight:400;transform:scaleX(0.9400);transform-origin:0 0;">7.12 KB</div>
<svg style="position:absolute;left:1313px;top:1057.3px;" width="30.8" height="20.4" viewBox="0 0 30.8 20.4"><path fill="#1e293b" d="M15.4 0C8.7 0 3.3 4.6 0 10.2c3.3 5.6 8.7 10.2 15.4 10.2S27.5 15.8 30.8 10.2C27.5 4.6 22.1 0 15.4 0z"/><circle cx="15.4" cy="10.2" r="6.3" fill="#fff"/><circle cx="15.4" cy="10.2" r="4.1" fill="#1e293b"/></svg>
<div style="position:absolute;left:1507.80px;top:1057.94px;white-space:nowrap;color:#374151;font-size:20.3px;line-height:20.3px;font-weight:400;transform:scaleX(0.9470);transform-origin:0 0;">0 days</div>
<svg style="position:absolute;left:1577px;top:1057.0px;" width="20.5" height="20.5" viewBox="0 0 20 20"><g fill="none" stroke="#2563eb" stroke-width="1.5" stroke-linejoin="round"><path d="M0.9 19.1 2.3 13 14.7 0.6 19.4 5.3 7 17.7z"/><path d="M12.2 3.1 16.9 7.8"/><path d="M5.6 14.4 12.9 7.1"/></g><path d="M0.6 19.4 1.4 15.9 4.1 18.6z" fill="#2563eb"/></svg>
<div style="position:absolute;left:2337px;top:1044.0px;width:144px;height:45.6px;box-sizing:border-box;background:#f6f7f9;border:1.6px solid #2271b1;border-radius:10px;box-shadow:0 1.5px 2px rgba(0,0,0,.06);"></div>
<div style="position:absolute;left:2352.00px;top:1058.04px;white-space:nowrap;color:#2271b1;font-size:21.6px;line-height:21.6px;font-weight:400;transform:scaleX(0.9467);transform-origin:0 0;">Run cleanup</div>
<div style="position:absolute;left:441px;top:1119.0px;width:2066px;height:82.5px;box-sizing:border-box;background:#f9fafb;border:1px solid #f0f1f3;border-top-color:#f8f9fa;border-bottom-color:#e6e8eb;border-radius:16px;"></div>
<div style="position:absolute;left:467.1px;top:1147.0px;width:24.7px;height:24.7px;box-sizing:border-box;background:#fff;border:1.3px solid #8c8f94;border-radius:5px;box-shadow:inset 0 1px 2px rgba(0,0,0,.1);"></div>
<svg style="position:absolute;left:529.3px;top:1148.3px;" width="23" height="23" viewBox="0 0 23 23"><circle cx="11.5" cy="11.5" r="10.4" fill="none" stroke="#5aa0f8" stroke-width="2"/><rect x="10.5" y="9.8" width="2.1" height="6.8" fill="#5aa0f8"/><circle cx="11.55" cy="6.9" r="1.25" fill="#5aa0f8"/></svg>
<div style="position:absolute;left:568.00px;top:1150.60px;white-space:nowrap;color:#0b0b0b;font-size:22px;line-height:22px;font-weight:400;-webkit-text-stroke:0.6px currentColor;transform:scaleX(0.9526);transform-origin:0 0;">Pingbacks</div>
<div style="position:absolute;left:1010.16px;top:1148.67px;white-space:nowrap;color:#ef4444;font-size:24.5px;line-height:24.5px;font-weight:700;transform:scaleX(0.9660);transform-origin:0 0;">36</div>
<div style="position:absolute;left:1138.76px;top:1151.74px;white-space:nowrap;color:#1f2937;font-size:20.3px;line-height:20.3px;font-weight:400;transform:scaleX(0.9400);transform-origin:0 0;">4.28 KB</div>
<svg style="position:absolute;left:1313px;top:1150.3px;" width="30.8" height="20.4" viewBox="0 0 30.8 20.4"><path fill="#1e293b" d="M15.4 0C8.7 0 3.3 4.6 0 10.2c3.3 5.6 8.7 10.2 15.4 10.2S27.5 15.8 30.8 10.2C27.5 4.6 22.1 0 15.4 0z"/><circle cx="15.4" cy="10.2" r="6.3" fill="#fff"/><circle cx="15.4" cy="10.2" r="4.1" fill="#1e293b"/></svg>
<div style="position:absolute;left:1507.80px;top:1150.94px;white-space:nowrap;color:#374151;font-size:20.3px;line-height:20.3px;font-weight:400;transform:scaleX(0.9470);transform-origin:0 0;">0 days</div>
<svg style="position:absolute;left:1577px;top:1150.0px;" width="20.5" height="20.5" viewBox="0 0 20 20"><g fill="none" stroke="#2563eb" stroke-width="1.5" stroke-linejoin="round"><path d="M0.9 19.1 2.3 13 14.7 0.6 19.4 5.3 7 17.7z"/><path d="M12.2 3.1 16.9 7.8"/><path d="M5.6 14.4 12.9 7.1"/></g><path d="M0.6 19.4 1.4 15.9 4.1 18.6z" fill="#2563eb"/></svg>
<div style="position:absolute;left:2337px;top:1137.0px;width:144px;height:45.6px;box-sizing:border-box;background:#f6f7f9;border:1.6px solid #2271b1;border-radius:10px;box-shadow:0 1.5px 2px rgba(0,0,0,.06);"></div>
<div style="position:absolute;left:2352.00px;top:1151.04px;white-space:nowrap;color:#2271b1;font-size:21.6px;line-height:21.6px;font-weight:400;transform:scaleX(0.9467);transform-origin:0 0;">Run cleanup</div>
<div style="position:absolute;left:441px;top:1212.0px;width:2066px;height:82.5px;box-sizing:border-box;background:#ffffff;border:1px solid #f0f1f3;border-top-color:#f8f9fa;border-bottom-color:#e6e8eb;border-radius:16px;"></div>
<div style="position:absolute;left:467.1px;top:1240.0px;width:24.7px;height:24.7px;box-sizing:border-box;background:#fff;border:1.3px solid #8c8f94;border-radius:5px;box-shadow:inset 0 1px 2px rgba(0,0,0,.1);"></div>
<svg style="position:absolute;left:529.3px;top:1241.3px;" width="23" height="23" viewBox="0 0 23 23"><circle cx="11.5" cy="11.5" r="10.4" fill="none" stroke="#5aa0f8" stroke-width="2"/><rect x="10.5" y="9.8" width="2.1" height="6.8" fill="#5aa0f8"/><circle cx="11.55" cy="6.9" r="1.25" fill="#5aa0f8"/></svg>
<div style="position:absolute;left:568.00px;top:1243.60px;white-space:nowrap;color:#0b0b0b;font-size:22px;line-height:22px;font-weight:400;-webkit-text-stroke:0.6px currentColor;transform:scaleX(0.9305);transform-origin:0 0;">Trackbacks</div>
<div style="position:absolute;left:1010.16px;top:1241.67px;white-space:nowrap;color:#ef4444;font-size:24.5px;line-height:24.5px;font-weight:700;transform:scaleX(0.9660);transform-origin:0 0;">45</div>
<div style="position:absolute;left:1138.76px;top:1244.74px;white-space:nowrap;color:#1f2937;font-size:20.3px;line-height:20.3px;font-weight:400;transform:scaleX(0.9400);transform-origin:0 0;">5.45 KB</div>
<svg style="position:absolute;left:1313px;top:1243.3px;" width="30.8" height="20.4" viewBox="0 0 30.8 20.4"><path fill="#1e293b" d="M15.4 0C8.7 0 3.3 4.6 0 10.2c3.3 5.6 8.7 10.2 15.4 10.2S27.5 15.8 30.8 10.2C27.5 4.6 22.1 0 15.4 0z"/><circle cx="15.4" cy="10.2" r="6.3" fill="#fff"/><circle cx="15.4" cy="10.2" r="4.1" fill="#1e293b"/></svg>
<div style="position:absolute;left:1507.80px;top:1243.94px;white-space:nowrap;color:#374151;font-size:20.3px;line-height:20.3px;font-weight:400;transform:scaleX(0.9470);transform-origin:0 0;">0 days</div>
<svg style="position:absolute;left:1577px;top:1243.0px;" width="20.5" height="20.5" viewBox="0 0 20 20"><g fill="none" stroke="#2563eb" stroke-width="1.5" stroke-linejoin="round"><path d="M0.9 19.1 2.3 13 14.7 0.6 19.4 5.3 7 17.7z"/><path d="M12.2 3.1 16.9 7.8"/><path d="M5.6 14.4 12.9 7.1"/></g><path d="M0.6 19.4 1.4 15.9 4.1 18.6z" fill="#2563eb"/></svg>
<div style="position:absolute;left:2337px;top:1230.0px;width:144px;height:45.6px;box-sizing:border-box;background:#f6f7f9;border:1.6px solid #2271b1;border-radius:10px;box-shadow:0 1.5px 2px rgba(0,0,0,.06);"></div>
<div style="position:absolute;left:2352.00px;top:1244.04px;white-space:nowrap;color:#2271b1;font-size:21.6px;line-height:21.6px;font-weight:400;transform:scaleX(0.9467);transform-origin:0 0;">Run cleanup</div>
<div style="position:absolute;left:441px;top:1314.0px;width:2066px;height:46.5px;background:#f3f4f6;border-radius:11px;"></div>
<div style="position:absolute;left:466.70px;top:1327.83px;white-space:nowrap;color:#111827;font-size:20.2px;line-height:20.2px;font-weight:700;transform:scaleX(1.0370);transform-origin:0 0;">Meta / relations</div>
<svg style="position:absolute;left:2471.5px;top:1333.5px;" width="14" height="9" viewBox="0 0 14 9"><path d="M1 7.6 7 1.4 13 7.6" fill="none" stroke="#111" stroke-width="1.45"/></svg>
<div style="position:absolute;left:441px;top:1374.0px;width:2066px;height:82.5px;box-sizing:border-box;background:#ffffff;border:1px solid #f0f1f3;border-top-color:#f8f9fa;border-bottom-color:#e6e8eb;border-radius:16px;"></div>
<div style="position:absolute;left:467.1px;top:1402.0px;width:24.7px;height:24.7px;box-sizing:border-box;background:#fff;border:1.3px solid #8c8f94;border-radius:5px;box-shadow:inset 0 1px 2px rgba(0,0,0,.1);"></div>
<svg style="position:absolute;left:529.3px;top:1403.3px;" width="23" height="23" viewBox="0 0 23 23"><circle cx="11.5" cy="11.5" r="10.4" fill="none" stroke="#5aa0f8" stroke-width="2"/><rect x="10.5" y="9.8" width="2.1" height="6.8" fill="#5aa0f8"/><circle cx="11.55" cy="6.9" r="1.25" fill="#5aa0f8"/></svg>
<div style="position:absolute;left:568.00px;top:1405.60px;white-space:nowrap;color:#0b0b0b;font-size:22px;line-height:22px;font-weight:400;-webkit-text-stroke:0.6px currentColor;transform:scaleX(0.9857);transform-origin:0 0;">Unused post meta</div>
<div style="position:absolute;left:997.00px;top:1403.67px;white-space:nowrap;color:#ef4444;font-size:24.5px;line-height:24.5px;font-weight:700;transform:scaleX(0.9660);transform-origin:0 0;">180</div>
<div style="position:absolute;left:1138.76px;top:1406.74px;white-space:nowrap;color:#1f2937;font-size:20.3px;line-height:20.3px;font-weight:400;transform:scaleX(0.9400);transform-origin:0 0;">8.91 KB</div>
<svg style="position:absolute;left:1313px;top:1405.3px;" width="30.8" height="20.4" viewBox="0 0 30.8 20.4"><path fill="#1e293b" d="M15.4 0C8.7 0 3.3 4.6 0 10.2c3.3 5.6 8.7 10.2 15.4 10.2S27.5 15.8 30.8 10.2C27.5 4.6 22.1 0 15.4 0z"/><circle cx="15.4" cy="10.2" r="6.3" fill="#fff"/><circle cx="15.4" cy="10.2" r="4.1" fill="#1e293b"/></svg>
<div style="position:absolute;left:1562.00px;top:1406.74px;white-space:nowrap;color:#6b7280;font-size:20.3px;line-height:20.3px;font-weight:400;transform:scaleX(1.0529);transform-origin:0 0;">N/A</div>
<div style="position:absolute;left:2337px;top:1392.0px;width:144px;height:45.6px;box-sizing:border-box;background:#f6f7f9;border:1.6px solid #2271b1;border-radius:10px;box-shadow:0 1.5px 2px rgba(0,0,0,.06);"></div>
<div style="position:absolute;left:2352.00px;top:1406.04px;white-space:nowrap;color:#2271b1;font-size:21.6px;line-height:21.6px;font-weight:400;transform:scaleX(0.9467);transform-origin:0 0;">Run cleanup</div>
<div style="position:absolute;left:441px;top:1467.0px;width:2066px;height:82.5px;box-sizing:border-box;background:#f9fafb;border:1px solid #f0f1f3;border-top-color:#f8f9fa;border-bottom-color:#e6e8eb;border-radius:16px;"></div>
<div style="position:absolute;left:467.1px;top:1495.0px;width:24.7px;height:24.7px;box-sizing:border-box;background:#fff;border:1.3px solid #8c8f94;border-radius:5px;box-shadow:inset 0 1px 2px rgba(0,0,0,.1);"></div>
<svg style="position:absolute;left:529.3px;top:1496.3px;" width="23" height="23" viewBox="0 0 23 23"><circle cx="11.5" cy="11.5" r="10.4" fill="none" stroke="#5aa0f8" stroke-width="2"/><rect x="10.5" y="9.8" width="2.1" height="6.8" fill="#5aa0f8"/><circle cx="11.55" cy="6.9" r="1.25" fill="#5aa0f8"/></svg>
<div style="position:absolute;left:568.00px;top:1498.60px;white-space:nowrap;color:#0b0b0b;font-size:22px;line-height:22px;font-weight:400;-webkit-text-stroke:0.6px currentColor;transform:scaleX(1.0040);transform-origin:0 0;">Duplicated post meta</div>
<div style="position:absolute;left:997.00px;top:1496.67px;white-space:nowrap;color:#ef4444;font-size:24.5px;line-height:24.5px;font-weight:700;transform:scaleX(0.9660);transform-origin:0 0;">270</div>
<div style="position:absolute;left:1128.15px;top:1499.74px;white-space:nowrap;color:#1f2937;font-size:20.3px;line-height:20.3px;font-weight:400;transform:scaleX(0.9400);transform-origin:0 0;">12.28 KB</div>
<svg style="position:absolute;left:1313px;top:1498.3px;" width="30.8" height="20.4" viewBox="0 0 30.8 20.4"><path fill="#1e293b" d="M15.4 0C8.7 0 3.3 4.6 0 10.2c3.3 5.6 8.7 10.2 15.4 10.2S27.5 15.8 30.8 10.2C27.5 4.6 22.1 0 15.4 0z"/><circle cx="15.4" cy="10.2" r="6.3" fill="#fff"/><circle cx="15.4" cy="10.2" r="4.1" fill="#1e293b"/></svg>
<div style="position:absolute;left:1562.00px;top:1499.74px;white-space:nowrap;color:#6b7280;font-size:20.3px;line-height:20.3px;font-weight:400;transform:scaleX(1.0529);transform-origin:0 0;">N/A</div>
<div style="position:absolute;left:2337px;top:1485.0px;width:144px;height:45.6px;box-sizing:border-box;background:#f6f7f9;border:1.6px solid #2271b1;border-radius:10px;box-shadow:0 1.5px 2px rgba(0,0,0,.06);"></div>
<div style="position:absolute;left:2352.00px;top:1499.04px;white-space:nowrap;color:#2271b1;font-size:21.6px;line-height:21.6px;font-weight:400;transform:scaleX(0.9467);transform-origin:0 0;">Run cleanup</div>
<div style="position:absolute;left:441px;top:1560.0px;width:2066px;height:82.5px;box-sizing:border-box;background:#ffffff;border:1px solid #f0f1f3;border-top-color:#f8f9fa;border-bottom-color:#e6e8eb;border-radius:16px;"></div>
<div style="position:absolute;left:467.1px;top:1588.0px;width:24.7px;height:24.7px;box-sizing:border-box;background:#fff;border:1.3px solid #8c8f94;border-radius:5px;box-shadow:inset 0 1px 2px rgba(0,0,0,.1);"></div>
<svg style="position:absolute;left:529.3px;top:1589.3px;" width="23" height="23" viewBox="0 0 23 23"><circle cx="11.5" cy="11.5" r="10.4" fill="none" stroke="#5aa0f8" stroke-width="2"/><rect x="10.5" y="9.8" width="2.1" height="6.8" fill="#5aa0f8"/><circle cx="11.55" cy="6.9" r="1.25" fill="#5aa0f8"/></svg>
<div style="position:absolute;left:568.00px;top:1591.60px;white-space:nowrap;color:#0b0b0b;font-size:22px;line-height:22px;font-weight:400;-webkit-text-stroke:0.6px currentColor;transform:scaleX(0.9924);transform-origin:0 0;">Unused comment meta</div>
<div style="position:absolute;left:1010.16px;top:1589.67px;white-space:nowrap;color:#ef4444;font-size:24.5px;line-height:24.5px;font-weight:700;transform:scaleX(0.9660);transform-origin:0 0;">90</div>
<div style="position:absolute;left:1138.76px;top:1592.74px;white-space:nowrap;color:#1f2937;font-size:20.3px;line-height:20.3px;font-weight:400;transform:scaleX(0.9400);transform-origin:0 0;">5.22 KB</div>
<svg style="position:absolute;left:1313px;top:1591.3px;" width="30.8" height="20.4" viewBox="0 0 30.8 20.4"><path fill="#1e293b" d="M15.4 0C8.7 0 3.3 4.6 0 10.2c3.3 5.6 8.7 10.2 15.4 10.2S27.5 15.8 30.8 10.2C27.5 4.6 22.1 0 15.4 0z"/><circle cx="15.4" cy="10.2" r="6.3" fill="#fff"/><circle cx="15.4" cy="10.2" r="4.1" fill="#1e293b"/></svg>
<div style="position:absolute;left:1562.00px;top:1592.74px;white-space:nowrap;color:#6b7280;font-size:20.3px;line-height:20.3px;font-weight:400;transform:scaleX(1.0529);transform-origin:0 0;">N/A</div>
<div style="position:absolute;left:2337px;top:1578.0px;width:144px;height:45.6px;box-sizing:border-box;background:#f6f7f9;border:1.6px solid #2271b1;border-radius:10px;box-shadow:0 1.5px 2px rgba(0,0,0,.06);"></div>
<div style="position:absolute;left:2352.00px;top:1592.04px;white-space:nowrap;color:#2271b1;font-size:21.6px;line-height:21.6px;font-weight:400;transform:scaleX(0.9467);transform-origin:0 0;">Run cleanup</div>
<div style="position:absolute;left:441px;top:1653.0px;width:2066px;height:82.5px;box-sizing:border-box;background:#f9fafb;border:1px solid #f0f1f3;border-top-color:#f8f9fa;border-bottom-color:#e6e8eb;border-radius:16px;"></div>
<div style="position:absolute;left:467.1px;top:1681.0px;width:24.7px;height:24.7px;box-sizing:border-box;background:#fff;border:1.3px solid #8c8f94;border-radius:5px;box-shadow:inset 0 1px 2px rgba(0,0,0,.1);"></div>
<svg style="position:absolute;left:529.3px;top:1682.3px;" width="23" height="23" viewBox="0 0 23 23"><circle cx="11.5" cy="11.5" r="10.4" fill="none" stroke="#5aa0f8" stroke-width="2"/><rect x="10.5" y="9.8" width="2.1" height="6.8" fill="#5aa0f8"/><circle cx="11.55" cy="6.9" r="1.25" fill="#5aa0f8"/></svg>
<div style="position:absolute;left:568.00px;top:1684.60px;white-space:nowrap;color:#0b0b0b;font-size:22px;line-height:22px;font-weight:400;-webkit-text-stroke:0.6px currentColor;transform:scaleX(1.0052);transform-origin:0 0;">Duplicated comment meta</div>
<div style="position:absolute;left:997.00px;top:1682.67px;white-space:nowrap;color:#ef4444;font-size:24.5px;line-height:24.5px;font-weight:700;transform:scaleX(0.9660);transform-origin:0 0;">105</div>
<div style="position:absolute;left:1138.76px;top:1685.74px;white-space:nowrap;color:#1f2937;font-size:20.3px;line-height:20.3px;font-weight:400;transform:scaleX(0.9400);transform-origin:0 0;">5.97 KB</div>
<svg style="position:absolute;left:1313px;top:1684.3px;" width="30.8" height="20.4" viewBox="0 0 30.8 20.4"><path fill="#1e293b" d="M15.4 0C8.7 0 3.3 4.6 0 10.2c3.3 5.6 8.7 10.2 15.4 10.2S27.5 15.8 30.8 10.2C27.5 4.6 22.1 0 15.4 0z"/><circle cx="15.4" cy="10.2" r="6.3" fill="#fff"/><circle cx="15.4" cy="10.2" r="4.1" fill="#1e293b"/></svg>
<div style="position:absolute;left:1562.00px;top:1685.74px;white-space:nowrap;color:#6b7280;font-size:20.3px;line-height:20.3px;font-weight:400;transform:scaleX(1.0529);transform-origin:0 0;">N/A</div>
<div style="position:absolute;left:2337px;top:1671.0px;width:144px;height:45.6px;box-sizing:border-box;background:#f6f7f9;border:1.6px solid #2271b1;border-radius:10px;box-shadow:0 1.5px 2px rgba(0,0,0,.06);"></div>
<div style="position:absolute;left:2352.00px;top:1685.04px;white-space:nowrap;color:#2271b1;font-size:21.6px;line-height:21.6px;font-weight:400;transform:scaleX(0.9467);transform-origin:0 0;">Run cleanup</div>
</body></html>
